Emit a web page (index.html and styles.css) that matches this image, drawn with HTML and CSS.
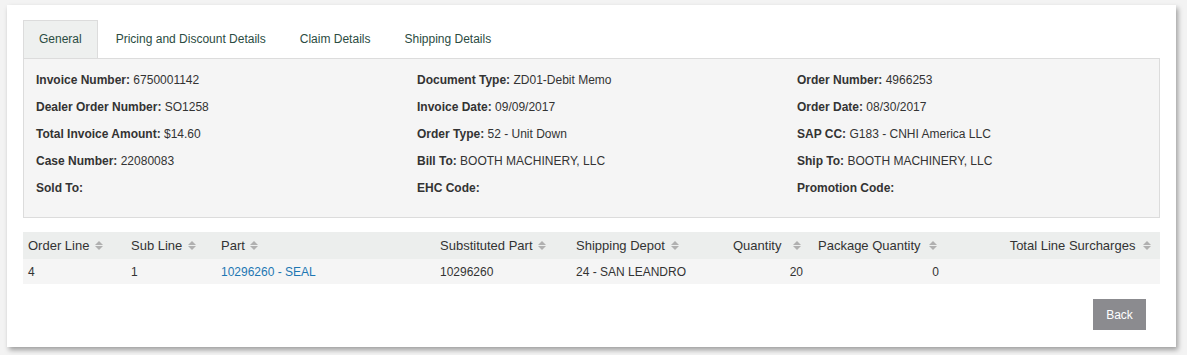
FILE: index.html
```html
<!DOCTYPE html>
<html lang="en">
<head>
  <meta charset="UTF-8" />
  <title>Invoice Details</title>
  <link rel="stylesheet" href="styles.css">
</head>
<body>
  <div class="card">
    <ul class="tabs">
      <li class="tab active">General</li>
      <li class="tab">Pricing and Discount Details</li>
      <li class="tab">Claim Details</li>
      <li class="tab">Shipping Details</li>
    </ul>

    <div class="panel">
      <div class="field"><b>Invoice Number:</b> 6750001142</div>
      <div class="field"><b>Document Type:</b> ZD01-Debit Memo</div>
      <div class="field"><b>Order Number:</b> 4966253</div>

      <div class="field"><b>Dealer Order Number:</b> SO1258</div>
      <div class="field"><b>Invoice Date:</b> 09/09/2017</div>
      <div class="field"><b>Order Date:</b> 08/30/2017</div>

      <div class="field"><b>Total Invoice Amount:</b> $14.60</div>
      <div class="field"><b>Order Type:</b> 52 - Unit Down</div>
      <div class="field"><b>SAP CC:</b> G183 - CNHI America LLC</div>

      <div class="field"><b>Case Number:</b> 22080083</div>
      <div class="field"><b>Bill To:</b> BOOTH MACHINERY, LLC</div>
      <div class="field"><b>Ship To:</b> BOOTH MACHINERY, LLC</div>

      <div class="field"><b>Sold To:</b></div>
      <div class="field"><b>EHC Code:</b></div>
      <div class="field"><b>Promotion Code:</b></div>
    </div>

    <table class="lines">
      <colgroup>
        <col style="width:103px">
        <col style="width:90px">
        <col style="width:219px">
        <col style="width:136px">
        <col style="width:150px">
        <col style="width:92px">
        <col style="width:132px">
        <col>
      </colgroup>
      <thead>
        <tr>
          <th>Order Line <span class="sort"></span></th>
          <th>Sub Line <span class="sort"></span></th>
          <th>Part <span class="sort"></span></th>
          <th>Substituted Part <span class="sort"></span></th>
          <th>Shipping Depot <span class="sort"></span></th>
          <th class="num wide">Quantity <span class="sort"></span></th>
          <th class="wide">Package Quantity <span class="sort"></span></th>
          <th class="num total">Total Line Surcharges <span class="sort"></span></th>
        </tr>
      </thead>
      <tbody>
        <tr>
          <td>4</td>
          <td>1</td>
          <td><a href="#">10296260 - SEAL</a></td>
          <td>10296260</td>
          <td>24 - SAN LEANDRO</td>
          <td class="num">20</td>
          <td class="num pkg">0</td>
          <td></td>
        </tr>
      </tbody>
    </table>

    <div class="actions">
      <button class="back-button">Back</button>
    </div>
  </div>
</body>
</html>
```

FILE: styles.css
```css
html, body {
  margin: 0;
  background: #f3f3f3;
}
body {
  font-family: "Liberation Sans", Arial, sans-serif;
  font-size: 12px;
  color: #333;
  padding: 5px 11px 8px 7px;
}
.card {
  width: 1169px;
  box-sizing: border-box;
  background: #fff;
  padding: 15px 16px 17px 16px;
  box-shadow: 2px 3px 5px rgba(0,0,0,0.35);
}
.tabs {
  list-style: none;
  margin: 0;
  padding: 0;
  display: flex;
  height: 38px;
}
.tab {
  height: 38px;
  line-height: 37px;
  padding: 0 15px;
  margin-right: 2px;
  color: #2b4c42;
  border: 1px solid transparent;
  border-bottom: none;
  box-sizing: border-box;
  font-size: 12px;
}
.tab.active {
  background: #eef0ef;
  border-color: #dcdcdc;
  position: relative;
  z-index: 1;
}
.panel {
  background: #f5f5f5;
  border: 1px solid #dcdcdc;
  padding: 7px 12px 16px 12px;
  display: grid;
  grid-template-columns: 381px 380px 1fr;
  grid-auto-rows: 27px;
  align-items: center;
}
.field b {
  font-weight: bold;
  color: #333;
}
.lines {
  width: 100%;
  table-layout: fixed;
  border-collapse: collapse;
  margin-top: 14px;
}
.lines th {
  background: #eceeed;
  font-weight: normal;
  font-size: 13px;
  text-align: left;
  height: 27px;
  padding: 0 5px;
  white-space: nowrap;
}
.lines td {
  background: #f5f5f5;
  height: 25px;
  padding: 0 5px;
  font-size: 12px;
}
.lines .num {
  text-align: right;
  padding-right: 10px;
}
.lines th.num.wide {
  padding-right: 12px;
}
.lines th.total {
  padding-right: 9px;
}
.lines td.pkg {
  padding-right: 6px;
}
.lines a {
  color: #1d77b3;
  text-decoration: none;
}
.sort {
  display: inline-block;
  width: 0;
  height: 0;
  margin-left: 2px;
  position: relative;
  top: -5px;
  border-left: 4px solid transparent;
  border-right: 4px solid transparent;
  border-bottom: 4px solid #b0b0b0;
}
.sort::after {
  content: "";
  position: absolute;
  left: -4px;
  top: 5px;
  border-left: 4px solid transparent;
  border-right: 4px solid transparent;
  border-top: 4px solid #b0b0b0;
}
.lines th.wide .sort {
  margin-left: 5px;
}
.lines th.num.wide .sort {
  margin-left: 8px;
}
.lines th.total .sort {
  margin-left: 4px;
}
.actions {
  display: flex;
  justify-content: flex-end;
  margin-top: 15px;
  padding-right: 14px;
}
.back-button {
  background: #8b8b8f;
  color: #fff;
  border: none;
  font-family: "Liberation Sans", Arial, sans-serif;
  font-size: 12px;
  width: 53px;
  height: 31px;
  cursor: pointer;
}
```
